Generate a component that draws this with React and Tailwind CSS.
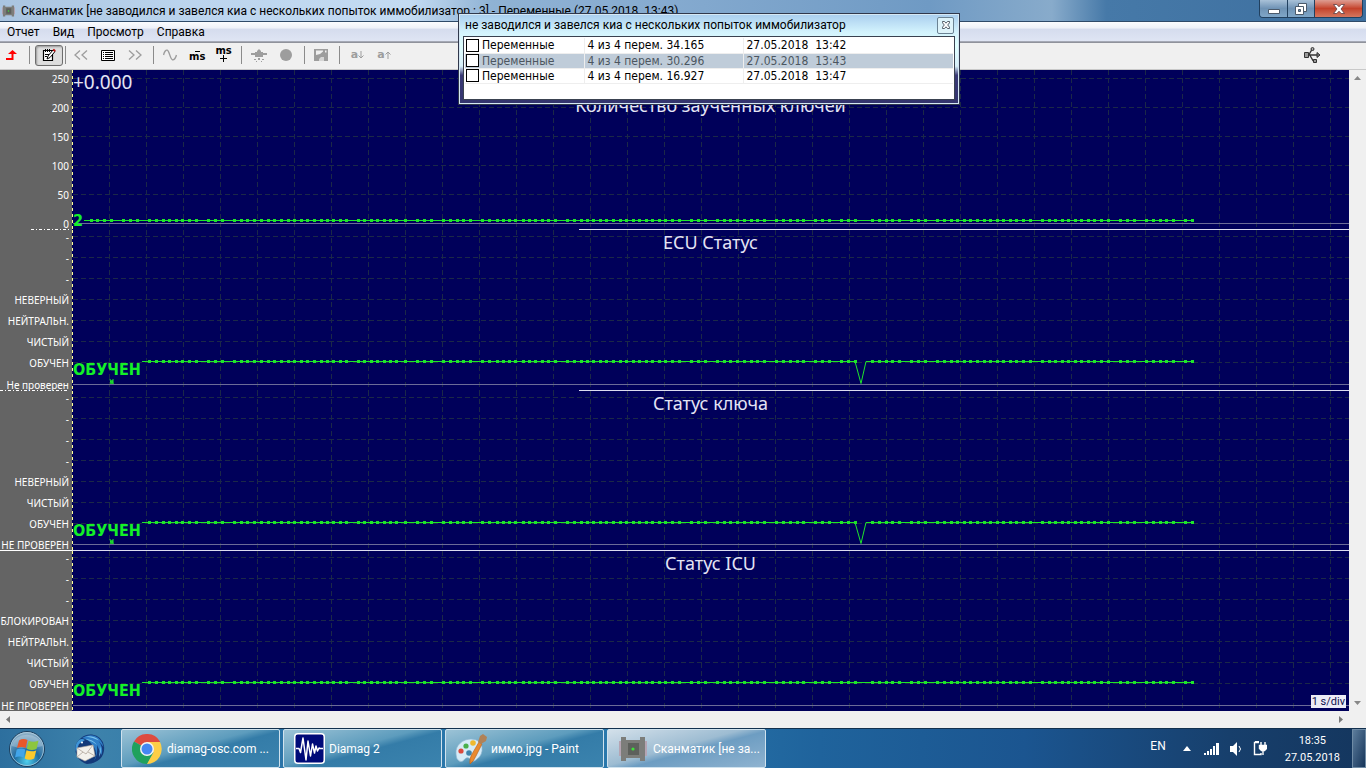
// App.jsx
import React, { useState } from 'react';

const GUTTER = 72;

// sample marks along the time axis, in window pixels
const EARLY_SAMPLES = [91, 97, 104, 111, 123, 130, 137];
const SAMPLES = [
  149, 156, 163, 169, 176, 182, 189, 196, 208, 215, 222, 234, 241, 247, 254, 261, 268, 274, 281, 288, 294, 301,
  307, 314, 321, 327, 333, 340, 346, 358, 364, 371, 377, 384, 390, 396, 405, 417, 424, 431, 443, 450, 457, 463,
  470, 482, 489, 497, 503, 509, 515, 523, 529, 535, 542, 548, 555, 567, 574, 581, 587, 593, 600, 606, 613, 620,
  626, 633, 639, 646, 652, 659, 665, 672, 679, 691, 698, 705, 717, 724, 730, 737, 744, 751, 757, 764, 776, 783,
  790, 797, 803, 815, 822, 829, 841, 848, 855, 872, 879, 886, 892, 899, 911, 918, 925, 937, 944, 951, 957, 964,
  970, 977, 984, 990, 997, 1003, 1010, 1016, 1023, 1030, 1042, 1049, 1055, 1062, 1068, 1075, 1081, 1088, 1094,
  1101, 1108, 1120, 1127, 1134, 1146, 1153, 1160, 1166, 1173, 1185, 1192,
];
const END = 1194;

const panels = [
  {
    id: 'keys', title: 'Количество заученных ключей', titleY: 42, height: 160, first: 8, step: 29,
    labels: ['250', '200', '150', '100', '50', '0'],
    base: 153, trace: 150, start: 84, value: '2', valueY: 156, line: 507, dotted: true,
  },
  {
    id: 'ecu', title: 'ECU Статус', titleY: 19, height: 161, first: 6, step: 21,
    labels: ['-', '-', '-', 'НЕВЕРНЫЙ', 'НЕЙТРАЛЬН.', 'ЧИСТЫЙ', 'ОБУЧЕН', 'Не проверен'],
    base: 154, trace: 131, start: 142, value: 'ОБУЧЕН', valueY: 145, line: 507, dotted: true, dip: true,
  },
  {
    id: 'key', title: 'Статус ключа', titleY: 19, height: 160, first: 6, step: 21,
    labels: ['-', '-', '-', '-', 'НЕВЕРНЫЙ', 'ЧИСТЫЙ', 'ОБУЧЕН', 'НЕ ПРОВЕРЕН'],
    base: 153, trace: 131, start: 142, value: 'ОБУЧЕН', valueY: 145, line: 0, dip: true,
  },
  {
    id: 'icu', title: 'Статус ICU', titleY: 19, height: 160, first: 6, step: 21,
    labels: ['-', '-', '-', 'БЛОКИРОВАН', 'НЕЙТРАЛЬН.', 'ЧИСТЫЙ', 'ОБУЧЕН', 'НЕ ПРОВЕРЕН'],
    base: 154, trace: 131, start: 142, value: 'ОБУЧЕН', valueY: 145, line: null,
  },
];

const records = [
  { id: 1, vars: '4 из 4 перем. 34.165', date: '27.05.2018', time: '13:42' },
  { id: 2, vars: '4 из 4 перем. 30.296', date: '27.05.2018', time: '13:43' },
  { id: 3, vars: '4 из 4 перем. 16.927', date: '27.05.2018', time: '13:47' },
];

function ChipIcon({ className }) {
  return (
    <svg viewBox="0 0 28 24" className={className}>
      <path d="M0 4h28v15H0z" fill="#b5a4b2" />
      <path d="M2 0h5v3h14V0h5v24h-5v-3H7v3H2z" fill="#7c7d7a" />
      <path d="M9 6h11v12H9z" fill="#5d605c" />
      <circle cx="14" cy="12" r="1.6" fill="#3fe03a" />
    </svg>
  );
}

function TitleBar() {
  return (
    <header className="flex h-[22px] items-start justify-between border-b border-[#2f4a68] bg-[linear-gradient(90deg,#a9c4e0_0%,#bcd5ee_14%,#c4dbf2_30%,#8fb2d4_36%,#86abd0_48%,#6f9ac4_68%,#88abcb_77%,#4679a8_81%,#3d6f9f_100%)] pr-[3px]">
      <div className="flex items-center gap-[6px] pt-[2px]">
        <ChipIcon className="ml-[2px] h-[14px] w-[13px]" />
        <h1 className="text-[12px] leading-[18px] whitespace-pre text-black">
          Сканматик [не заводился и завелся киа с нескольких попыток иммобилизатор : 3] - Переменные (27.05.2018  13:43)
        </h1>
      </div>
      <div className="flex h-[18px] overflow-hidden rounded-b-[4px] border border-t-0 border-[#21405f]">
        <button aria-label="Свернуть" className="flex w-[28px] items-center justify-center border-r border-[#21405f] bg-linear-to-b from-[#a9c1d8] via-[#6f93b5] to-[#7fa6c8]">
          <svg viewBox="0 0 12 12" className="size-3"><path d="M.5 6.500h11v4H.5z" fill="#fff" stroke="#4b5a6b" /></svg>
        </button>
        <button aria-label="Восстановить" className="flex w-[27px] items-center justify-center border-r border-[#21405f] bg-linear-to-b from-[#a9c1d8] via-[#6f93b5] to-[#7fa6c8]">
          <svg viewBox="0 0 12 12" className="size-3" fill="#fff" stroke="#4b5a6b">
            <path d="M3.500.5h8v8h-8z" />
            <path d="M.5 3.500h8v8h-8z" />
            <path d="M3.500 6.500h2v2h-2z" fill="#6f93b5" />
          </svg>
        </button>
        <button aria-label="Закрыть" className="flex w-[47px] items-center justify-center bg-linear-to-b from-[#dd9d92] via-[#c4422b] to-[#d5765e]">
          <svg viewBox="0 0 12 10" className="h-[10px] w-3">
            <path d="M.5.5h3.300L6 2.800 8.200.5h3.300L8 5l3.500 4.500H8.200L6 7.200 3.800 9.500H.5L4 5z" fill="#fff" stroke="#5b3b40" strokeWidth=".8" />
          </svg>
        </button>
      </div>
    </header>
  );
}

function MenuBar() {
  return (
    <nav className="flex h-[20px] items-center gap-[13px] border-b border-[#a5a9b5] bg-[linear-gradient(#fbfcfe_0%,#eef1f8_33%,#d5dcee_36%,#dfe5f4_100%)] pl-[7px] text-[12px] leading-4 text-black">
      {['Отчет', 'Вид', 'Просмотр', 'Справка'].map((item) => (
        <button key={item}>{item}</button>
      ))}
    </nav>
  );
}

const Divider = () => <span className="h-[18px] w-px bg-[#8b8b8b]" />;

function Toolbar() {
  return (
    <div className="flex h-[28px] items-center justify-between border-t border-b border-t-[#8f929b] border-b-[#c9c9c9] bg-[#f0f0f0] pr-[45px] pb-[2px] text-[#9d9d9d]">
      <div className="flex items-center">
        <button aria-label="Назад" className="mr-[12px] ml-[5px]">
          <svg viewBox="0 0 12 12" className="size-3" fill="#f00"><path d="M7.500 1 12 5H8.500v6H1V9h5.500V5H3z" /></svg>
        </button>
        <Divider />
        <button aria-label="Заметки" className="mr-[2px] ml-[5px] flex h-[21px] w-[28px] items-center justify-center rounded-[3px] border border-[#6d6d6d] bg-[#dedede] shadow-[inset_1px_1px_2px_#999]">
          <svg viewBox="0 0 14 14" className="size-[14px]">
            <path d="M1.500 2.500h9v10h-9z" fill="#fff" stroke="#000" strokeWidth="1.200" />
            <path d="M3.500 1v3M5.500 1v3M7.500 1v3M3 6.500h4M3 8.500h2" stroke="#000" />
            <path d="M5 11l1-3 5-6 2 1.500-5 6z" fill="#fff" stroke="#000" />
            <path d="M10.500 2l1.500-1.200L13.800 2.500 12.600 4z" fill="#c01010" />
          </svg>
        </button>
        <Divider />
        <button aria-label="Предыдущая" className="ml-[8px]">
          <svg viewBox="0 0 14 10" className="h-[10px] w-[14px]" fill="none" stroke="currentColor" strokeWidth="1.300"><path d="M6 .5 1 5l5 4.500M13 .5 8 5l5 4.500" /></svg>
        </button>
        <button aria-label="Список" className="ml-[13px]">
          <svg viewBox="0 0 14 11" className="h-[11px] w-[14px]" fill="none" stroke="#000">
            <path d="M.5.5h13v10H.5z" fill="#fff" />
            <path d="M2 2.500h1M2 4.500h1M2 6.500h1M2 8.500h1M4 2.500h8M4 4.500h8M4 6.500h8M4 8.500h8" />
          </svg>
        </button>
        <button aria-label="Следующая" className="ml-[13px]">
          <svg viewBox="0 0 14 10" className="h-[10px] w-[14px]" fill="none" stroke="currentColor" strokeWidth="1.300"><path d="m1 .5 5 4.500-5 4.500M8 .5 13 5 8 9.500" /></svg>
        </button>
        <span className="w-[11px]" />
        <Divider />
        <button aria-label="Сигнал" className="ml-[9px]">
          <svg viewBox="0 0 14 12" className="h-3 w-[14px]" fill="none" stroke="currentColor" strokeWidth="1.400"><path d="M.5 6C1.500 2 3 .8 4.200 1.200 6.500 2 7 10 9.500 10.800 11 11.200 12.500 9 13.500 6" /></svg>
        </button>
        <button aria-label="Уменьшить развёртку" className="mt-[3px] ml-[12px] flex flex-col items-center font-['DejaVu_Sans'] text-[10px] leading-[10px] font-bold text-black">
          <span className="h-px w-[5px] bg-black" />
          <span>ms</span>
        </button>
        <button aria-label="Увеличить развёртку" className="mb-[3px] ml-[10px] flex flex-col items-center font-['DejaVu_Sans'] text-[10px] leading-[9px] font-bold text-black">
          <span>ms</span>
          <svg viewBox="0 0 7 7" className="size-[7px]" stroke="#000"><path d="M3.500 0v7M0 3.500h7" /></svg>
        </button>
        <span className="w-[9px]" />
        <Divider />
        <button aria-label="Маркер" className="ml-[9px]">
          <svg viewBox="0 0 16 13" className="h-[13px] w-4" fill="currentColor"><path d="M6 2l2-2 2 2v1h2v1h4v2h-4v2H4V6H0V4h4V3h2zM3 10h2v1H3zM7 9h2v2H7zM11 10h2v1h-2zM5 12h1v1H5zM10 12h1v1h-1z" /></svg>
        </button>
        <button aria-label="Запись" className="ml-[13px]">
          <svg viewBox="0 0 12 12" className="size-3" fill="currentColor"><circle cx="6" cy="6" r="6" /></svg>
        </button>
        <span className="w-[12px]" />
        <Divider />
        <button aria-label="Снимок" className="ml-[9px]">
          <svg viewBox="0 0 14 12" className="h-3 w-[14px]"><path d="M0 0h14v12H0z" fill="#9d9d9d" /><path d="M2 1.500h7v1l-3 2.500-4 1z" fill="#f0f0f0" /><path d="M5 10l2-2h3v4H5z" fill="#d5d5d5" /><path d="M11 1.500h1.500v2H11z" fill="#f0f0f0" /></svg>
        </button>
        <span className="w-[11px]" />
        <Divider />
        <div className="ml-[11px] flex gap-[13px] font-['DejaVu_Sans'] text-[11px] leading-3 font-bold">
          <button className="flex items-center" aria-label="Шрифт меньше">a<svg viewBox="0 0 6 8" className="h-2 w-[6px]" fill="none" stroke="currentColor"><path d="M3 0v7M.5 4.500 3 7l2.500-2.500" /></svg></button>
          <button className="flex items-center" aria-label="Шрифт больше">a<svg viewBox="0 0 6 8" className="h-2 w-[6px]" fill="none" stroke="currentColor"><path d="M3 8V1M.5 3.500 3 1l2.500 2.500" /></svg></button>
        </div>
      </div>
      <svg viewBox="0 0 17 16" className="h-4 w-[17px]" fill="none" stroke="#333">
        <path d="M4 8h11M5 7.500 8 2.500h2M6 8.500l3 5h2" strokeWidth="1.400" />
        <path d="M.5 5.500h4v5h-4z" fill="#999" />
        <path d="M13 5.500 16 8l-3 2.500z" fill="#777" />
        <circle cx="8.500" cy="2" r="1.500" fill="#aaa" />
        <path d="M9.500 12.500h3v3h-3z" fill="#999" />
      </svg>
    </div>
  );
}

function Panel({ panel }) {
  const { id, title, titleY, height, first, step, labels, base, trace, start, value, valueY, line, dotted, dip } = panel;
  const marks = start < 100 ? [...EARLY_SAMPLES, ...SAMPLES] : SAMPLES;
  const from = start - GUTTER;
  const end = END - GUTTER;
  const path = dip
    ? `M${from} ${trace + 0.5}H783L789 ${base - 0.5}L794 ${trace + 0.5}H${end}`
    : `M${from} ${trace + 0.5}H${end}`;
  const rows = labels.slice(0, -1).map((_, i) => first + i * step + 0.5);

  return (
    <section aria-label={title} className="flex">
      <svg className="w-[72px] shrink-0 overflow-visible" height={height}>
        <rect width="72" height={height} fill="#646464" />
        <g className="fill-white font-['Noto_Sans'] text-[10px]" textAnchor="end">
          {labels.map((label, i) => (
            <text key={i} x="69" y={(i === labels.length - 1 ? base + 1 : first + i * step + 1) + 4}>{label}</text>
          ))}
        </g>
        {dotted && <path d={`M${id === 'keys' ? 31 : 0} ${height - 0.5}H69`} stroke="#fff" strokeDasharray="3 2 1 2" />}
        {line === 0 && <path d={`M0 ${height - 0.5}H72`} stroke="#fff" />}
      </svg>
      <svg className="min-w-0 flex-1 bg-[#00005a]" height={height}>
        <defs>
          <pattern id={`cols-${id}`} width="37" height="8" patternUnits="userSpaceOnUse">
            <path d="M0 0h1v5H0z" fill="#1b2848" />
          </pattern>
        </defs>
        <rect x="37" width="100%" height="100%" fill={`url(#cols-${id})`} />
        {rows.map((y) => (
          <line key={y} x1="1" x2="100%" y1={y} y2={y} stroke="#1b2848" strokeDasharray="5 3" />
        ))}
        <line x1="0.5" x2="0.5" y1="0" y2={height} stroke="#ffff9c" strokeDasharray="3 3" />
        <line x1="1" x2="100%" y1={base + 0.5} y2={base + 0.5} stroke="#6c6c98" />
        {line !== null && <line x1={line} x2="100%" y1={height - 0.5} y2={height - 0.5} stroke="#dcdcf0" />}
        <text x="50%" y={titleY} textAnchor="middle" className="fill-[#e4e4f4] font-['Noto_Sans'] text-[18px]">{title}</text>
        {id === 'keys' && <text x="1" y="19" className="fill-[#e4e4f4] font-['Noto_Sans'] text-[19px]">+0.000</text>}
        <path d={path} fill="none" stroke="#1ee62a" />
        <g fill="#1ee62a">
          {marks.map((x) => <rect key={x} x={x - GUTTER - 1} y={trace - 1} width="3" height="3" />)}
        </g>
        {dip && <path d={`M38 ${base - 5}l1 5 1-4 1 4V${base - 5}`} fill="none" stroke="#1ee62a" />}
        <text x="1" y={valueY} className="fill-[#14f028] font-['DejaVu_Sans_Condensed','DejaVu_Sans'] text-[16px] font-bold">{value}</text>
      </svg>
    </section>
  );
}

function RecordsWindow({ onClose }) {
  const [checked, setChecked] = useState([]);
  const toggle = (id) => setChecked((prev) => (prev.includes(id) ? prev.filter((c) => c !== id) : [...prev, id]));

  return (
    <div className="absolute top-[13px] left-1/2 -ml-[225px] w-[502px] border border-[#30384c] bg-[linear-gradient(#a8cdee_0%,#d3f3fd_20%,#e0ffff_35%,#d8f0fa_58%,#3a3a76_68%,#34346e_100%)] px-[4px] pb-[4px] shadow-[inset_0_0_0_1px_#d5e8f4]">
      <div className="flex h-[22px] items-center justify-between pr-px pl-[2px]">
        <h2 className="text-[12px] leading-4 text-black">не заводился и завелся киа с нескольких попыток иммобилизатор</h2>
        <button aria-label="Закрыть окно" onClick={onClose} className="flex size-[17px] items-center justify-center rounded-[2px] border border-[#6b8394] bg-[#ddf3fa]">
          <svg viewBox="0 0 8 8" className="size-2"><path d="M.5.5h2L4 2.200 5.500.5h2v1.300L5.700 4l1.800 2.200v1.300h-2L4 5.800 2.500 7.500h-2V6.200L2.300 4 .5 1.800z" fill="#fff" stroke="#444c58" strokeWidth=".9" /></svg>
        </button>
      </div>
      <div className="h-[64px] border border-[#3a4250] bg-white px-px pt-px">
        <table className="w-full table-fixed border-collapse font-['DejaVu_Sans_Condensed','DejaVu_Sans',sans-serif] text-[12px] leading-[14px]">
          <colgroup>
            <col className="w-[119px]" />
            <col className="w-[159px]" />
            <col />
          </colgroup>
          <tbody>
            {records.map((r) => (
              <tr key={r.id} className={r.id === 2 ? 'h-[15px] border-b border-[#eee] bg-[#bfccd9] text-[#4c5660]' : 'h-[15px] border-b border-[#eee] text-black'}>
                <td className="border-r border-[#eee] p-0">
                  <label className="flex items-center gap-[3px] pl-px">
                    <input type="checkbox" checked={checked.includes(r.id)} onChange={() => toggle(r.id)} className="size-[13px] appearance-none border border-black bg-white checked:bg-black" />
                    Переменные
                  </label>
                </td>
                <td className="border-r border-[#eee] p-0 pl-[3px]">{r.vars}</td>
                <td className="p-0 pl-[3px] whitespace-pre">{r.date}{'  '}{r.time}</td>
              </tr>
            ))}
          </tbody>
        </table>
      </div>
    </div>
  );
}

function StartOrb() {
  return (
    <svg viewBox="0 0 36 36" className="size-[36px]">
      <defs>
        <radialGradient id="orb" cx=".5" cy=".85" r=".8">
          <stop offset="0" stopColor="#4fd0ee" />
          <stop offset=".45" stopColor="#1e6a9f" />
          <stop offset="1" stopColor="#8eb0c8" />
        </radialGradient>
      </defs>
      <circle cx="18" cy="18" r="17.500" fill="url(#orb)" stroke="#1b3d5c" />
      <circle cx="18" cy="18" r="16.500" fill="none" stroke="#b5d3e2" opacity=".7" />
      <path d="M2.500 15a16 15 0 0 1 31 0Q18 20 2.500 15z" fill="#fff" opacity=".25" />
      <path d="M10 9.500q4-2.500 8.500-.5l-1.800 8q-4-2-8.700 0z" fill="#e8582a" />
      <path d="M19.700 9.700q4.500 2.300 9.800-.2l-2 8.500q-5 2-9.700-.3z" fill="#8cc63e" />
      <path d="M7.700 18.500q4.500-2 8.600 0l-1.800 8q-4-2.200-8.500 0z" fill="#42a5ea" />
      <path d="M17.500 19.200q4.700 2.200 9.700.2l-2 8.100q-5 2.500-9.500 0z" fill="#fbc92d" />
    </svg>
  );
}

function MailIcon() {
  return (
    <svg viewBox="0 0 32 30" className="h-[30px] w-8">
      <path d="M4 22Q-1 11 8 4q4-4 11-3.500Q29 2 31 12q1 8-4 13-6 5-13 5-7-2-10-8z" fill="#143a7a" />
      <path d="M9 4q6-4 13-2 7 3 8.500 11L25 6q6 8 3.500 15L24 11q1 10-3 16 4-8 0-14Q16 5 9 4z" fill="#2f7fc8" />
      <path d="M13 2.500q8-1 13 4-6-3-13-4zM12 5q8 0 12 6-5-4-12-6zM27 12q2 6-1 11 1-6 1-11z" fill="#7cc4ee" />
      <path d="M6 6Q1 11 3 18l3-8 6-4q-3-2-6 0z" fill="#3f96d8" />
      <path d="M4 14l16-3 2 11-10 5-8-4z" fill="#f4f1ec" stroke="#b9aea3" strokeWidth=".6" />
      <path d="M4 14l9 6 7-9M4 23l6-5M22 22l-7-4" fill="none" stroke="#b0a59a" strokeWidth=".8" />
      <circle cx="9" cy="8.500" r="1" fill="#fff" />
    </svg>
  );
}

function ChromeIcon() {
  return (
    <svg viewBox="0 0 30 30" className="size-[30px]">
      <path d="M15 15 2 7.500A15 15 0 0 1 28 7.500L28 8H15z" fill="#dd4b3e" />
      <path d="M15 15 2 7.500A15 15 0 0 0 15 30l6.500-11.500z" fill="#1fa15d" />
      <path d="M15 8h13a15 15 0 0 1-13 22l6.500-11.500z" fill="#fdce47" />
      <circle cx="15" cy="15" r="7" fill="#f4f4f4" />
      <circle cx="15" cy="15" r="5.500" fill="#4587f3" />
    </svg>
  );
}

function WaveIcon() {
  return (
    <svg viewBox="0 0 31 31" className="size-[31px]">
      <rect x=".75" y=".75" width="29.500" height="29.500" rx="3" fill="#000a78" stroke="#fff" strokeWidth="1.500" />
      <path d="M2 15.500h3l1.500 4L9 5l3 22 2-19 2.500 15 2-12 2 9 1.500-7 1.500 5 1.500-3 1 .5h3" fill="none" stroke="#fff" strokeWidth="1.500" strokeLinejoin="round" />
    </svg>
  );
}

function PaintIcon() {
  return (
    <svg viewBox="0 0 32 32" className="size-8">
      <path d="M1 21C0 12 8 6 16 6q9 0 11 8 1 8-5 12-4 4-6 1-3-4-6-1-3 4-6 2-3-2-3-7z" fill="#d5ebf7" stroke="#8cb4d0" strokeWidth=".7" />
      <circle cx="6" cy="18" r="2.600" fill="#dc4a3d" />
      <circle cx="11" cy="13" r="2.600" fill="#49b04c" />
      <circle cx="18" cy="10" r="2.800" fill="#efb92f" />
      <circle cx="14" cy="20" r="2.800" fill="#3d84ac" />
      <path d="M15 31q-1-5 2-10l7-12 3 2-6 12q-2 5-6 8z" fill="#e98a2f" stroke="#b4601c" strokeWidth=".6" />
      <path d="m23 9 2-6 3-2 4 3-1 4-5 3z" fill="#b08258" />
    </svg>
  );
}

const tasks = [
  { name: 'diamag-osc.com ...', icon: <ChromeIcon /> },
  { name: 'Diamag 2', icon: <WaveIcon /> },
  { name: 'иммо.jpg - Paint', icon: <PaintIcon /> },
  { name: 'Сканматик [не за...', icon: <ChipIcon className="h-6 w-7" />, active: true },
];

function Taskbar() {
  return (
    <footer className="flex h-[40px] items-center justify-between border-t border-[#12304e] bg-[linear-gradient(90deg,#2d6f9e_0%,#3d82ab_7%,#2a74a8_20%,#2a78ac_45%,#1f639c_60%,#1b5590_75%,#173f6c_90%,#14365e_100%)] text-white">
      <div className="flex items-center">
        <button aria-label="Пуск" className="ml-[9px]"><StartOrb /></button>
        <button aria-label="Почта" className="mr-[16px] ml-[28px]"><MailIcon /></button>
        <div className="flex gap-[3px]">
          {tasks.map((t) => (
            <button
              key={t.name}
              className={`flex h-[39px] w-[159px] items-center gap-[4px] rounded-[2px] border border-[#cfe2ee] pl-[9px] text-[12px] leading-4 ${t.active ? 'bg-[linear-gradient(165deg,#d3e0ea_0%,#9dbcd2_45%,#6d9dc2_55%,#8fb3d0_100%)]' : 'bg-[linear-gradient(165deg,#9cc3d6_0%,#5d9cbd_45%,#347ca8_55%,#3b83ae_100%)]'}`}
            >
              <span className="flex w-[32px] justify-center">{t.icon}</span>
              <span className="whitespace-nowrap">{t.name}</span>
            </button>
          ))}
        </div>
      </div>
      <div className="flex h-full items-center">
        <span className="mb-[6px] text-[12px] leading-4">EN</span>
        <button aria-label="Скрытые значки" className="ml-[17px]">
          <svg viewBox="0 0 8 5" className="h-[5px] w-2"><path d="M4 0 8 5H0z" fill="#fff" /></svg>
        </button>
        <svg viewBox="0 0 15 12" className="ml-[13px] h-3 w-[15px]" fill="#fff"><path d="M0 10h2v2H0zM3 8h2v4H3zM6 6h2v6H6zM9 3h2v9H9zM12 0h3v12h-3z" /></svg>
        <svg viewBox="0 0 13 14" className="ml-[11px] h-[14px] w-[13px]" fill="#fff"><path d="M0 4h3l4-4v14l-4-4H0z" /><path d="M9 4q3 3 0 6" fill="none" stroke="#fff" /></svg>
        <svg viewBox="0 0 14 15" className="ml-[10px] h-[15px] w-[14px]" fill="none" stroke="#fff">
          <path d="M6 1.500H1.500v12H8V12" strokeWidth="1.400" />
          <path d="M2.500 0h3v1h-3z" fill="#fff" />
          <path d="M6.500 4.500h7v3l-2 2h-3l-2-2zM8 1v3M12 1v3M10 9v5" fill="#fff" strokeWidth="1.400" />
        </svg>
        <div className="ml-[18px] flex flex-col items-center text-[11px] leading-[17px]">
          <time>18:35</time>
          <time>27.05.2018</time>
        </div>
        <button aria-label="Свернуть все окна" className="ml-[12px] h-full w-[14px] border border-[#6f8ba5] bg-linear-to-br from-[#5d7d9c] to-[#16355a]" />
      </div>
    </footer>
  );
}

export default function App() {
  const [listOpen, setListOpen] = useState(true);

  return (
    <div className="relative flex min-h-screen flex-col overflow-hidden bg-[#f0f0f0] font-['Roboto','Noto_Sans',sans-serif]">
      <TitleBar />
      <MenuBar />
      <Toolbar />
      <main className="flex">
        <div className="relative min-w-0 flex-1">
          {panels.map((p) => <Panel key={p.id} panel={p} />)}
          <span className="absolute right-[3px] bottom-[3px] bg-[#ececf6] px-px text-[11px] leading-[13px] text-[#10104c]">1 s/div</span>
        </div>
        <div className="flex w-[17px] flex-col items-center justify-between bg-[#f0f0f0] py-[6px]">
          <svg viewBox="0 0 7 4" className="h-1 w-[7px]"><path d="M3.500 0 7 4H0z" fill="#888" /></svg>
          <svg viewBox="0 0 7 4" className="h-1 w-[7px]"><path d="M3.500 4 7 0H0z" fill="#888" /></svg>
        </div>
      </main>
      <div className="flex flex-1 items-center justify-between pr-[23px] pl-[6px]">
        <svg viewBox="0 0 4 7" className="h-[7px] w-1"><path d="M0 3.500 4 0v7z" fill="#777" /></svg>
        <svg viewBox="0 0 4 7" className="h-[7px] w-1"><path d="M4 3.500 0 0v7z" fill="#777" /></svg>
      </div>
      <Taskbar />
      {listOpen && <RecordsWindow onClose={() => setListOpen(false)} />}
    </div>
  );
}
